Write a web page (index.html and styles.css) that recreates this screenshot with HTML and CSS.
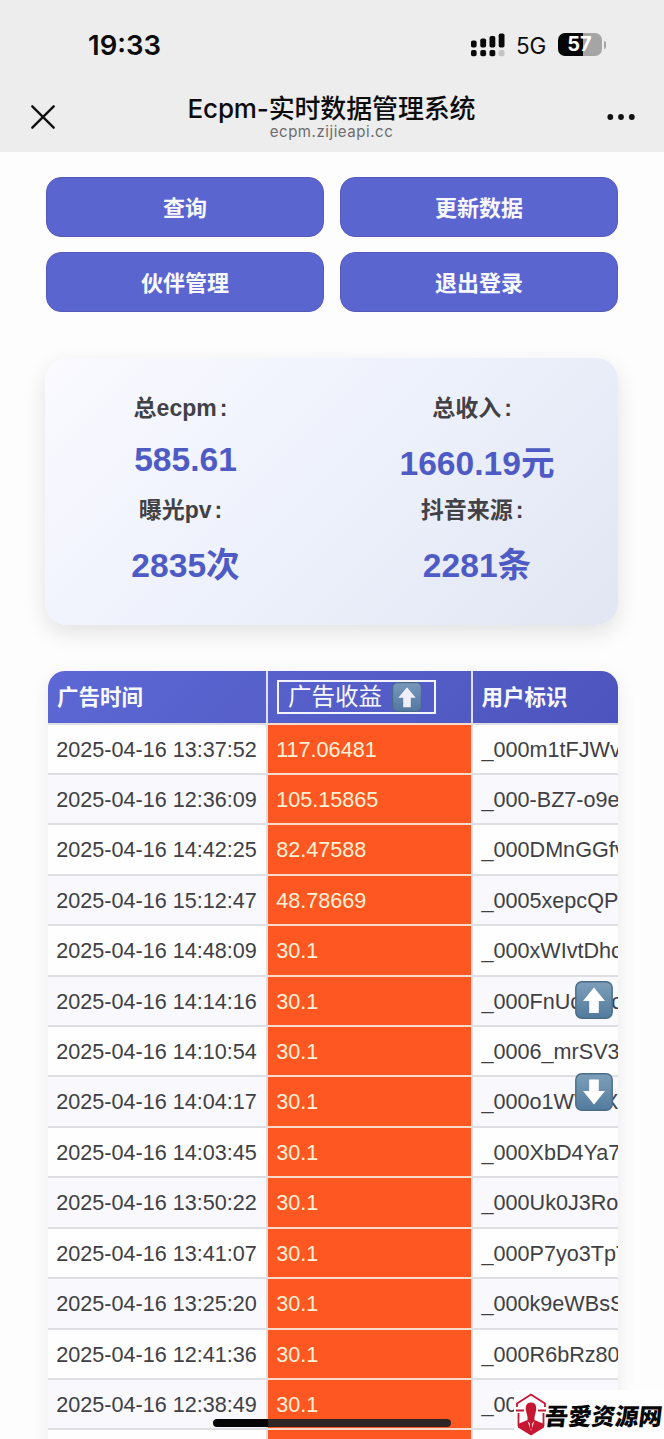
FILE: index.html
```html
<!DOCTYPE html>
<html lang="zh-CN">
<head>
<meta charset="utf-8">
<title>Ecpm-实时数据管理系统</title>
<link rel="stylesheet" href="styles.css">
</head>
<body>
<div class="screen">
  <header class="top">
    <div class="status">
      <span class="clock">19:33</span>
      <div class="status-right">
        <svg class="signal" width="36" height="24" viewBox="0 0 36 24">
          <g fill="#080808"><rect x="1" y="7.5" width="5.6" height="7" rx="1.8"/><rect x="10.3" y="5.5" width="5.8" height="9" rx="1.8"/><rect x="19.5" y="3" width="5.8" height="11.5" rx="1.8"/><rect x="28.7" y="0.5" width="5.8" height="14" rx="1.8"/><rect x="1" y="17" width="5.6" height="6.3" rx="1.8"/><rect x="10.3" y="17" width="5.8" height="6.3" rx="1.8"/><rect x="19.5" y="17" width="5.8" height="6.3" rx="1.8"/></g>
          <rect x="28.7" y="17" width="5.8" height="6.3" rx="1.8" fill="#c4c4c4"/>
        </svg>
        <span class="net">5G</span>
        <div class="battery"><span class="level">57</span><i class="cap"></i></div>
      </div>
    </div>
    <div class="nav">
      <svg width="26" height="26" viewBox="0 0 26 26"><path d="M2.3 2.3 23.7 23.7M23.7 2.3 2.3 23.7" stroke="#111" stroke-width="2.4" stroke-linecap="round"/></svg>
      <div class="titles"><div class="title">Ecpm-实时数据管理系统</div><div class="host">ecpm.zijieapi.cc</div></div>
      <svg width="28" height="8" viewBox="0 0 28 8" fill="#111"><circle cx="3.3" cy="4" r="2.9"/><circle cx="14" cy="4" r="2.9"/><circle cx="24.8" cy="4" r="2.9"/></svg>
    </div>
  </header>

  <main class="content">
    <div class="actions">
      <button class="btn">查询</button><button class="btn">更新数据</button>
      <button class="btn">伙伴管理</button><button class="btn">退出登录</button>
    </div>

    <section class="summary">
      <div class="stats">
        <div class="label">总ecpm<span class="colon">:</span></div><div class="value tall">585.61</div>
        <div class="label">曝光pv<span class="colon">:</span></div><div class="value">2835次</div>
      </div>
      <div class="stats">
        <div class="label">总收入<span class="colon">:</span></div><div class="value tall low">1660.19元</div>
        <div class="label">抖音来源<span class="colon">:</span></div><div class="value">2281条</div>
      </div>
    </section>

    <section class="table">
      <div class="head">
        <div class="th">广告时间</div>
        <div class="th sortcell"><div class="sort">广告收益<svg class="key" width="30" height="30" viewBox="0 0 38 38"><use href="#up"/></svg></div></div>
        <div class="th">用户标识</div>
      </div>
      <div class="row"><span>2025-04-16 13:37:52</span><span class="hot">117.06481</span><span>_000m1tFJWv</span></div>
      <div class="row"><span>2025-04-16 12:36:09</span><span class="hot">105.15865</span><span>_000-BZ7-o9e</span></div>
      <div class="row"><span>2025-04-16 14:42:25</span><span class="hot">82.47588</span><span>_000DMnGGfv</span></div>
      <div class="row"><span>2025-04-16 15:12:47</span><span class="hot">48.78669</span><span>_0005xepcQP</span></div>
      <div class="row"><span>2025-04-16 14:48:09</span><span class="hot">30.1</span><span>_000xWIvtDhc</span></div>
      <div class="row"><span>2025-04-16 14:14:16</span><span class="hot">30.1</span><span>_000FnUcMoc</span></div>
      <div class="row"><span>2025-04-16 14:10:54</span><span class="hot">30.1</span><span>_0006_mrSV3</span></div>
      <div class="row"><span>2025-04-16 14:04:17</span><span class="hot">30.1</span><span>_000o1WVwX</span></div>
      <div class="row"><span>2025-04-16 14:03:45</span><span class="hot">30.1</span><span>_000XbD4Ya7</span></div>
      <div class="row"><span>2025-04-16 13:50:22</span><span class="hot">30.1</span><span>_000Uk0J3Ro</span></div>
      <div class="row"><span>2025-04-16 13:41:07</span><span class="hot">30.1</span><span>_000P7yo3TpT</span></div>
      <div class="row"><span>2025-04-16 13:25:20</span><span class="hot">30.1</span><span>_000k9eWBsS</span></div>
      <div class="row"><span>2025-04-16 12:41:36</span><span class="hot">30.1</span><span>_000R6bRz80</span></div>
      <div class="row"><span>2025-04-16 12:38:49</span><span class="hot">30.1</span><span>_00</span></div>
      <div class="row"><span></span><span class="hot"></span><span></span></div>
    </section>
  </main>

  <div class="jump">
    <svg width="38" height="38" viewBox="0 0 38 38">
      <defs>
        <linearGradient id="g" x1="0" y1="0" x2="0" y2="1"><stop offset="0" stop-color="#7d9fb9"/><stop offset="1" stop-color="#537b9e"/></linearGradient>
        <g id="up"><rect x=".8" y=".8" width="36.4" height="36.4" rx="6" fill="url(#g)" stroke="#496c88" stroke-width="1.4"/><path d="M19 6.5 30 20H23.8V32H14.2V20H8Z" fill="#fff"/></g>
      </defs>
      <use href="#up"/>
    </svg>
    <svg width="38" height="38" viewBox="0 0 38 38"><rect x=".8" y=".8" width="36.4" height="36.4" rx="6" fill="url(#g)" stroke="#496c88" stroke-width="1.4"/><path d="M19 31.5 30 18H23.8V6.5H14.2V18H8Z" fill="#fff"/></svg>
  </div>

  <div class="home-bar"></div>

  <div class="brand">
    <svg width="32" height="44" viewBox="0 0 32 44">
      <path d="M2 14V10.5L16 1.5 30 10.5V14" fill="none" stroke="#c51632" stroke-width="1.8"/>
      <path d="M1 17.5H9M23 17.5H31M3.5 20V33M28.5 20V33" fill="none" stroke="#c51632" stroke-width="1.8"/>
      <path d="M16 9.5C11.5 9.5 10.5 12.5 10.8 17L12.5 24V27L3 31V34.5L16 42.5 29 34.5V31L19.5 27V24L21.2 17C21.5 12.5 20.5 9.5 16 9.5Z" fill="#c51632"/>
      <path d="M12.5 28 16 31.5 19.5 28 17.6 34 16 38 14.4 34Z" fill="#f3c0c6"/>
      <path d="M15.2 30H16.8L17.3 35 16 37 14.7 35Z" fill="#c51632"/>
    </svg>
    <span class="brand-name">吾愛资源网</span>
  </div>
</div>
</body>
</html>
```

FILE: styles.css
```css
* { box-sizing: border-box; }
body { margin: 0; background: #fdfdfd; font-family: "Liberation Sans", "Noto Sans CJK SC", sans-serif; color: #404044; }
.screen { position: relative; width: 664px; height: 1439px; overflow: hidden; }

.top { height: 152px; background: #ededed; color: #0c0c0c; font-family: Inter, "Noto Sans CJK SC", sans-serif; }
.status { height: 90px; padding: 0 62px 0 88px; display: flex; align-items: center; justify-content: space-between; }
.clock { font-size: 27.5px; font-weight: 600; line-height: 36px; letter-spacing: 0; }
.status-right { display: flex; align-items: center; }
.signal { margin-right: 10px; margin-top: -1px; }
.net { font-size: 22.5px; line-height: 30px; width: 32px; letter-spacing: -.2px; margin-right: 10px; padding-top: 1px; }
.battery { position: relative; width: 44px; height: 23px; border-radius: 7px; background: linear-gradient(90deg, #050505 57%, #a5a5a5 57%); display: flex; align-items: center; justify-content: center; margin-top: -1px; }
.level { color: #fff; font-weight: 700; font-size: 20px; line-height: 23px; padding-right: 5px; padding-left: 4px; }
.cap { position: absolute; right: -4px; top: 8px; width: 2.5px; height: 8px; border-radius: 0 3px 3px 0; background: #a5a5a5; }
.nav { height: 62px; padding: 0 29px 0 30px; display: grid; grid-template-columns: 26px 1fr 28px; align-items: center; }
.nav > svg { margin-top: -8px; }
.titles { text-align: center; margin-top: -11px; }
.title { font-size: 26px; line-height: 34px; font-weight: 500; white-space: nowrap; letter-spacing: -.15px; }
.host { font-size: 15px; line-height: 15px; margin-top: -2px; color: #6c6c6c; letter-spacing: .55px; }

.content { padding: 24.5px 46px 0; }
.actions { display: grid; grid-template-columns: 278px 278px; gap: 15.5px 16px; }
.btn { height: 60px; border: 1px solid #5759bb; border-radius: 15px; background: #5b65d0; color: #f7f8ff; font: 700 22px/59px "Liberation Sans", "Noto Sans CJK SC", sans-serif; padding: 1px 0 0; }

.summary { margin: 46px 0 0 -1px; width: 573px; height: 266.5px; padding-top: 33px; border-radius: 22px; display: grid; grid-template-columns: 281px 292px; background: linear-gradient(135deg, #fafaff 0%, #edf1fc 50%, #e2e6f2 100%); box-shadow: 0 8px 22px rgba(0, 0, 0, .11); text-align: center; font-weight: 700; }
.stats:last-child { padding-left: 10px; }
.stats .label { padding-right: 10px; }
.label { font-size: 23px; line-height: 34px; height: 34px; color: #424246; font-weight: 700; }
.colon { padding-left: 3px; }
.value { font-size: 33.6px; line-height: 48px; height: 48px; color: #4f5bc4; }
.tall { height: 68px; padding-top: 11px; }
.low { padding-top: 15px; }
.stats .label + .value:last-child { height: 60px; padding-top: 15px; }

.table { margin: 46.5px 0 0 2px; width: 570px; border-radius: 17px 17px 0 0; overflow: hidden; box-shadow: 0 6px 20px rgba(0, 0, 0, .08); font-size: 21.6px; }
.head, .row { display: grid; grid-template-columns: 220px 204.5px 145.5px; }
.head { height: 51.5px; background: linear-gradient(135deg, #5c68d4, #4e54bd); }
.th { color: #f8f9ff; font-weight: 700; font-size: 21.5px; line-height: 55px; padding-left: 9px; border-right: 2px solid #dfe0ee; white-space: nowrap; }
.th:last-child, .row span:last-child { border-right: 0; }
.sort { margin-top: 9px; width: 159px; height: 34px; border: 2px solid #f3f4ff; display: flex; align-items: center; font-weight: 400; font-size: 23.5px; line-height: 34px; padding-left: 9px; }
.key { margin-left: 10px; opacity: .9; }
.row { height: 50.43px; }
.row span { height: 50.43px; padding-left: 8.2px; line-height: 50px; border-top: 2px solid #dedfe3; border-right: 2px solid #dedfe3; background: #fefefe; white-space: nowrap; overflow: hidden; }
.row span:last-child { padding-left: 9px; }
.row:nth-child(odd) span { background: #f8f8fd; }
.row .hot, .row:nth-child(odd) .hot { background: #fe5722; color: #fff2d6; border-color: #f7dccd #dedfe3; }

.jump { position: absolute; left: 575px; top: 981px; display: flex; flex-direction: column; gap: 54px; }
.home-bar { position: absolute; left: 213px; top: 1419px; width: 238px; height: 8px; border-radius: 4px; background: linear-gradient(90deg, #050505 23%, #302525 23%); }
.brand { position: absolute; left: 514px; top: 1390px; width: 150px; height: 49px; background: #fefefe; display: flex; align-items: center; padding-left: 1px; }
.brand svg { flex: none; }
.brand-name { color: #080808; font-family: "Noto Sans CJK SC", sans-serif; font-weight: 900; font-size: 23.5px; line-height: 30px; white-space: nowrap; margin-left: -2px; transform: skewX(-7deg); }
```
